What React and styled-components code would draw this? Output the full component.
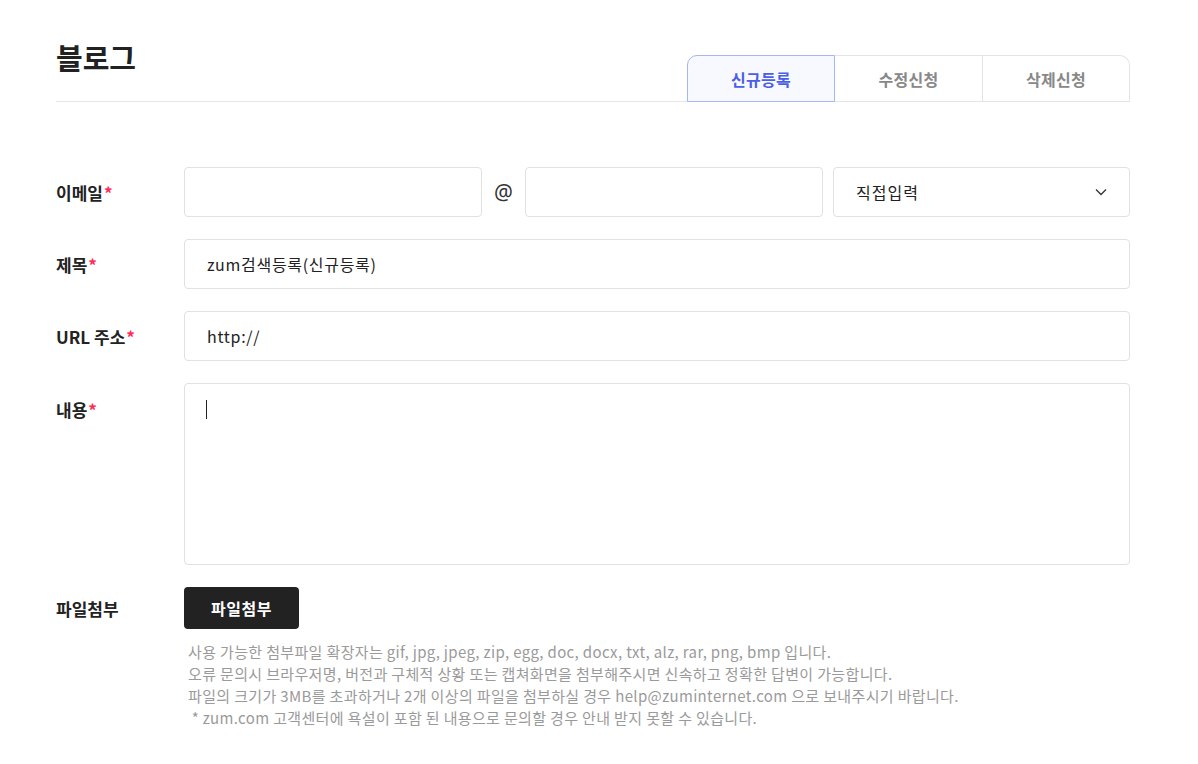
import React from "react";
import styled, { createGlobalStyle } from "styled-components";

const GlobalStyle = createGlobalStyle`
  body {
    margin: 0;
    background: #fff;
    font-family: "Noto Sans CJK KR", "Noto Sans", sans-serif;
    color: #222;
  }
  * { box-sizing: border-box; }
`;

const tabs = ["신규등록", "수정신청", "삭제신청"];

const notes = [
  "사용 가능한 첨부파일 확장자는 gif, jpg, jpeg, zip, egg, doc, docx, txt, alz, rar, png, bmp 입니다.",
  "오류 문의시 브라우저명, 버전과 구체적 상황 또는 캡쳐화면을 첨부해주시면 신속하고 정확한 답변이 가능합니다.",
  "파일의 크기가 3MB를 초과하거나 2개 이상의 파일을 첨부하실 경우 help@zuminternet.com 으로 보내주시기 바랍니다.",
  " * zum.com 고객센터에 욕설이 포함 된 내용으로 문의할 경우 안내 받지 못할 수 있습니다.",
];

const App = () => {
  const [active, setActive] = React.useState(0);
  return (
    <Page>
      <GlobalStyle />
      <Header>
        <Title>블로그</Title>
        <Tabs>
          {tabs.map((t, i) => (
            <Tab key={t} $active={active === i} onClick={() => setActive(i)}>
              {t}
            </Tab>
          ))}
        </Tabs>
      </Header>

      <Form>
        <Row>
          <Label>
            이메일<Star>*</Star>
          </Label>
          <EmailGroup>
            <Input />
            <At>@</At>
            <Input />
            <Select>
              <span>직접입력</span>
              <Chevron viewBox="0 0 12 8" width="12" height="8">
                <path d="M1 1.5l5 5 5-5" fill="none" stroke="#333" strokeWidth="1.3" />
              </Chevron>
            </Select>
          </EmailGroup>
        </Row>
        <Row>
          <Label>
            제목<Star>*</Star>
          </Label>
          <Input defaultValue="zum검색등록(신규등록)" />
        </Row>
        <Row>
          <Label>
            URL 주소<Star>*</Star>
          </Label>
          <Input defaultValue="http://" />
        </Row>
        <Row $top>
          <Label $top>
            내용<Star>*</Star>
          </Label>
          <TextArea>
            <Caret />
          </TextArea>
        </Row>
        <Row>
          <Label>파일첨부</Label>
          <FileButton>파일첨부</FileButton>
        </Row>
        <Notes>
          {notes.map((n) => (
            <li key={n}>{n}</li>
          ))}
        </Notes>
      </Form>
    </Page>
  );
};

export default App;

const Page = styled.div`
  width: 1074px;
  margin-left: 56px;
  padding-top: 34px;
`;

const Header = styled.div`
  display: flex;
  justify-content: space-between;
  align-items: flex-end;
  border-bottom: 1px solid #e6e6e6;
  height: 68px;
`;

const Title = styled.h1`
  margin: 0;
  align-self: flex-start;
  font-size: 29px;
  font-weight: 700;
  line-height: 46px;
  color: #222;
`;

const Tabs = styled.div`
  display: flex;
  margin-bottom: -1px;
`;

const Tab = styled.div`
  width: 148px;
  height: 47px;
  display: flex;
  align-items: center;
  justify-content: center;
  font-size: 16px;
  font-weight: 700;
  letter-spacing: 0.3px;
  cursor: pointer;
  border: 1px solid ${(p) => (p.$active ? "#a3b6f5" : "#e2e4ea")};
  border-left-width: ${(p) => (p.$active ? "1px" : "0")};
  background: ${(p) => (p.$active ? "#f7f9ff" : "#fff")};
  color: ${(p) => (p.$active ? "#4b5fe6" : "#888")};
  &:first-child {
    border-left-width: 1px;
    border-top-left-radius: 10px;
  }
  &:last-child {
    width: 147px;
    border-top-right-radius: 10px;
  }
`;

const Form = styled.div`
  padding-top: 65px;
  display: flex;
  flex-direction: column;
`;

const Row = styled.div`
  display: flex;
  align-items: ${(p) => (p.$top ? "flex-start" : "center")};
  margin-bottom: 22px;
`;

const Label = styled.div`
  width: 128px;
  flex-shrink: 0;
  font-size: 17px;
  font-weight: 700;
  color: #222;
  padding-top: ${(p) => (p.$top ? "14px" : "0")};
`;

const Star = styled.span`
  color: #ff2d55;
  margin-left: 1px;
`;

const EmailGroup = styled.div`
  flex: 1;
  display: grid;
  grid-template-columns: 298px 43px 298px 1fr;
  align-items: center;
  & > :nth-child(4) {
    margin-left: 10px;
  }
`;

const Input = styled.input`
  flex: 1;
  width: 100%;
  height: 50px;
  border: 1px solid #e1e1e1;
  border-radius: 4px;
  padding: 0 22px;
  font-family: inherit;
  font-size: 16px;
  letter-spacing: 0.7px;
  color: #222;
  outline: none;
  background: #fff;
`;

const At = styled.span`
  text-align: center;
  font-family: "Noto Sans", sans-serif;
  font-size: 21px;
  color: #333;
`;

const Select = styled.div`
  height: 50px;
  border: 1px solid #e1e1e1;
  border-radius: 4px;
  display: flex;
  align-items: center;
  justify-content: space-between;
  padding: 0 22px;
  font-size: 16px;
  letter-spacing: 1px;
  color: #222;
`;

const Chevron = styled.svg`
  display: block;
`;

const TextArea = styled.div`
  flex: 1;
  height: 182px;
  border: 1px solid #e1e1e1;
  border-radius: 4px;
  padding: 16px 21px;
`;

const Caret = styled.div`
  width: 1px;
  height: 19px;
  background: #222;
`;

const FileButton = styled.button`
  width: 115px;
  height: 42px;
  border: none;
  border-radius: 4px;
  background: #222;
  color: #fff;
  font-family: inherit;
  font-size: 16px;
  font-weight: 700;
  letter-spacing: 0.5px;
  cursor: pointer;
`;

const Notes = styled.ul`
  list-style: none;
  margin: -10px 0 0 132px;
  padding: 0;
  li {
    font-size: 15px;
    line-height: 22px;
    letter-spacing: 0.35px;
    color: #9a9a9a;
    white-space: pre;
  }
`;
